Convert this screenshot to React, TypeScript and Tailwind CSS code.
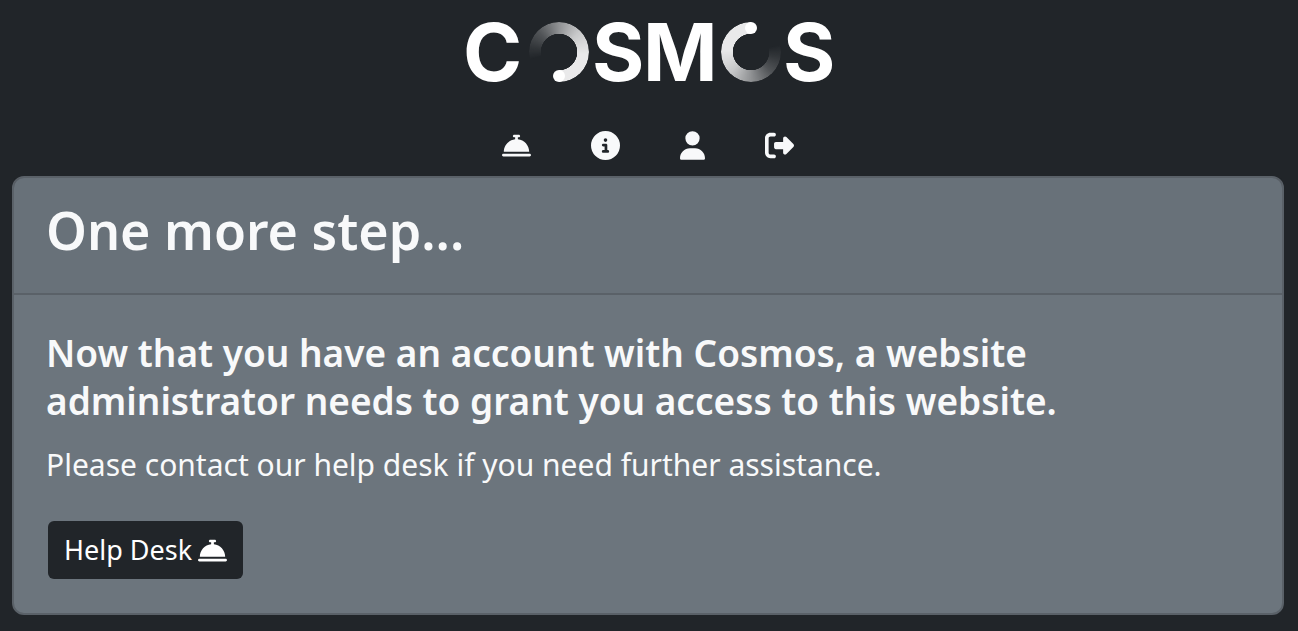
import { FaBellConcierge, FaCircleInfo, FaRightFromBracket, FaUser } from 'react-icons/fa6';

const navItems = [
  { label: 'Help Desk', icon: FaBellConcierge, className: 'h-[29px] w-[29px]' },
  { label: 'About', icon: FaCircleInfo, className: 'h-[29px] w-[29px]' },
  { label: 'Account', icon: FaUser, className: 'h-[29px] w-[25px]' },
  { label: 'Sign out', icon: FaRightFromBracket, className: 'h-[29px] w-[29px]' },
];

const ring =
  'h-full w-full rounded-full [mask-image:radial-gradient(circle,transparent_18px,black_18.5px)]';

function Logo() {
  return (
    <svg
      viewBox="-6 -20 378 100"
      className="h-[100px] w-[378px] fill-white font-['Inter',sans-serif] text-[80px] font-bold"
      role="img"
      aria-label="Cosmos"
    >
      <text x="-2" y="60">C</text>
      {/* open rings stand in for both letters O */}
      <foreignObject x="64" y="1" width="60" height="60">
        <div
          className={`${ring} bg-[conic-gradient(from_255deg,transparent_0deg,#ffffff14_25deg,#ffffff38_60deg,#ffffff80_105deg,#ffffffc0_150deg,#ffffffe6_200deg,#ffffffe6_285deg,transparent_285deg)]`}
        />
      </foreignObject>
      <circle cx="94" cy="55" r="6" />
      <text x="127" y="60">S</text>
      <text x="178" y="60">M</text>
      <foreignObject x="256" y="1" width="60" height="60">
        <div
          className={`${ring} bg-[conic-gradient(from_75deg,transparent_0deg,#ffffff14_25deg,#ffffff38_60deg,#ffffff80_105deg,#ffffffc0_150deg,#ffffffe6_200deg,#ffffffe6_285deg,transparent_285deg)]`}
        />
      </foreignObject>
      <circle cx="286" cy="7" r="6" />
      <text x="318" y="60">S</text>
    </svg>
  );
}

export default function App() {
  return (
    <div className="min-h-screen bg-[#212529] pt-px pr-3.5 pb-4 pl-3 font-['Noto_Sans',sans-serif] text-[#f8f9fa]">
      <header className="flex flex-col items-center">
        <Logo />
        <nav className="mt-[30px] flex gap-[60px]">
          {navItems.map(({ label, icon: Icon, className }) => (
            <a key={label} href="#" aria-label={label}>
              <Icon className={className} />
            </a>
          ))}
        </nav>
      </header>

      <main className="mt-4 rounded-xl border-2 border-[#5a6168] bg-[#6c757d]">
        <div className="border-b-2 border-[#5a6168] bg-black/3 px-8 pt-[18px] pb-[30px]">
          <h1 className="text-[52px] leading-[67px] font-semibold">One more step...</h1>
        </div>
        <div className="px-8 pt-[34px] pb-[34px]">
          <h2 className="max-w-[1040px] text-[37px] leading-12 font-semibold">
            Now that you have an account with Cosmos, a website administrator needs to grant you
            access to this website.
          </h2>
          <p className="mt-4 text-[30px] leading-12">
            Please contact our help desk if you need further assistance.
          </p>
          <button
            type="button"
            className="mt-8 ml-0.5 flex h-[58px] items-center gap-1.5 rounded-md bg-[#212529] px-4 text-[27px] text-white"
          >
            Help Desk
            <FaBellConcierge className="h-[29px] w-[29px]" />
          </button>
        </div>
      </main>
    </div>
  );
}
